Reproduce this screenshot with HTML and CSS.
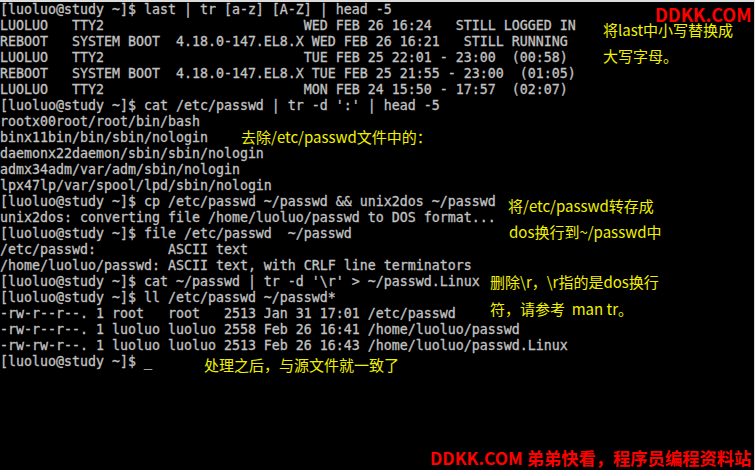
FILE: index.html
```html
<!DOCTYPE html>
<html lang="zh-CN">
<head>
  <meta charset="UTF-8">
  <meta name="viewport" content="width=device-width, initial-scale=1.0">
  <title>tr 命令示例</title>
  <link rel="stylesheet" href="styles.css">
</head>
<body>
  <div class="screen">
    <div class="term">
      <div class="line">[luoluo@study ~]$ last | tr [a-z] [A-Z] | head -5</div>
      <div class="line">LUOLUO   TTY2                         WED FEB 26 16:24   STILL LOGGED IN</div>
      <div class="line">REBOOT   SYSTEM BOOT  4.18.0-147.EL8.X WED FEB 26 16:21   STILL RUNNING</div>
      <div class="line">LUOLUO   TTY2                         TUE FEB 25 22:01 - 23:00  (00:58)</div>
      <div class="line">REBOOT   SYSTEM BOOT  4.18.0-147.EL8.X TUE FEB 25 21:55 - 23:00  (01:05)</div>
      <div class="line">LUOLUO   TTY2                         MON FEB 24 15:50 - 17:57  (02:07)</div>
      <div class="line">[luoluo@study ~]$ cat /etc/passwd | tr -d ':' | head -5</div>
      <div class="line">rootx00root/root/bin/bash</div>
      <div class="line">binx11bin/bin/sbin/nologin</div>
      <div class="line">daemonx22daemon/sbin/sbin/nologin</div>
      <div class="line">admx34adm/var/adm/sbin/nologin</div>
      <div class="line">lpx47lp/var/spool/lpd/sbin/nologin</div>
      <div class="line">[luoluo@study ~]$ cp /etc/passwd ~/passwd &amp;&amp; unix2dos ~/passwd</div>
      <div class="line">unix2dos: converting file /home/luoluo/passwd to DOS format...</div>
      <div class="line">[luoluo@study ~]$ file /etc/passwd  ~/passwd</div>
      <div class="line">/etc/passwd:         ASCII text</div>
      <div class="line">/home/luoluo/passwd: ASCII text, with CRLF line terminators</div>
      <div class="line">[luoluo@study ~]$ cat ~/passwd | tr -d '\r' &gt; ~/passwd.Linux</div>
      <div class="line">[luoluo@study ~]$ ll /etc/passwd ~/passwd*</div>
      <div class="line">-rw-r--r--. 1 root   root   2513 Jan 31 17:01 /etc/passwd</div>
      <div class="line">-rw-r--r--. 1 luoluo luoluo 2558 Feb 26 16:41 /home/luoluo/passwd</div>
      <div class="line">-rw-rw-r--. 1 luoluo luoluo 2513 Feb 26 16:43 /home/luoluo/passwd.Linux</div>
      <div class="line">[luoluo@study ~]$ _</div>
    </div>

    <!-- annotations on top of the console -->
    <div class="brand brand-top">DDKK.COM</div>
    <div class="note note-1">将last中小写替换成</div>
    <div class="note note-2">大写字母。</div>
    <div class="note note-3">去除/etc/passwd文件中的：</div>
    <div class="note note-4">将/etc/passwd转存成</div>
    <div class="note note-5">dos换行到~/passwd中</div>
    <div class="note note-6">删除\r，\r指的是dos换行</div>
    <div class="note note-7">符，请参考&nbsp; man tr。</div>
    <div class="note note-8">处理之后，与源文件就一致了</div>
    <div class="brand brand-bottom">DDKK.COM 弟弟快看，程序员编程资料站</div>
  </div>
</body>
</html>
```

FILE: styles.css
```css
:root {
  --bg-color: #000000;
  --term-color: #c2c2c2;
  --note-color: #f2f200;
  --brand-color: #ff0000;
  --edge-color: #dcdcdc;
  --term-font: 'DejaVu Sans Mono', 'Liberation Mono', monospace;
  --note-font: 'Noto Sans CJK SC', 'Noto Sans', sans-serif;
}

* {
  box-sizing: border-box;
  margin: 0;
  padding: 0;
}

body {
  background: var(--bg-color);
  width: 755px;
  height: 470px;
  overflow: hidden;
}

.screen {
  position: relative;
  width: 755px;
  height: 470px;
  border-top: 2px solid var(--edge-color);
  border-right: 1px solid var(--edge-color);
  background: var(--bg-color);
}

.term {
  display: flex;
  flex-direction: column;
  align-items: flex-start;
  font-family: var(--term-font);
  font-size: 13.29px;
  line-height: 16px;
  color: var(--term-color);
}

.line {
  white-space: pre;
  height: 16px;
  -webkit-text-stroke: 0.3px var(--term-color);
}

/* yellow annotations */
.note {
  position: absolute;
  font-family: var(--note-font);
  font-size: 15px;
  line-height: 16px;
  color: var(--note-color);
  white-space: nowrap;
}

.note-1 { left: 603px; top: 20px; }
.note-2 { left: 603px; top: 46px; }
.note-3 { left: 241px; top: 127px; }
.note-4 { left: 508px; top: 196px; }
.note-5 { left: 509px; top: 222px; }
.note-6 { left: 490px; top: 272px; }
.note-7 { left: 490px; top: 299px; }
.note-8 { left: 204px; top: 355px; }

/* site watermark */
.brand {
  position: absolute;
  font-family: var(--note-font);
  font-weight: bold;
  color: var(--brand-color);
  white-space: nowrap;
}

.brand-top {
  left: 655px;
  top: 4px;
  font-size: 18px;
  line-height: 16px;
}

.brand-bottom {
  left: 430px;
  top: 446px;
  font-size: 17.3px;
  line-height: 20px;
}
```
